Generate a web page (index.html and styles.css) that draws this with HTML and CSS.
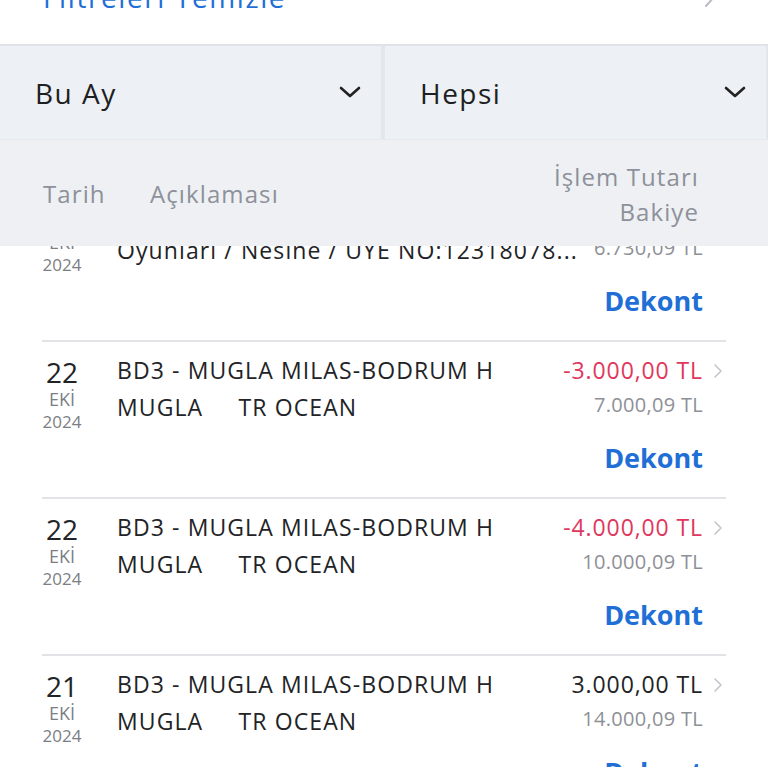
FILE: index.html
```html
<!DOCTYPE html>
<html lang="tr">
<head>
<meta charset="utf-8">
<link rel="stylesheet" href="styles.css">
</head>
<body>
<div class="page">
  <div class="clear-row">
    <span class="clear-link">Filtreleri Temizle</span>
    <svg class="clear-chev" width="14" height="24" viewBox="0 0 14 24"><path d="M3 3 L11 12 L3 21" fill="none" stroke="#b9bdc3" stroke-width="2" stroke-linecap="round" stroke-linejoin="round"/></svg>
  </div>
  <div class="selects">
    <div class="select"><span>Bu Ay</span><svg width="22" height="14" viewBox="0 0 22 14"><path d="M2 3 L11 11 L20 3" fill="none" stroke="#222" stroke-width="2.6" stroke-linecap="round" stroke-linejoin="round"/></svg></div>
    <div class="select"><span>Hepsi</span><svg width="22" height="14" viewBox="0 0 22 14"><path d="M2 3 L11 11 L20 3" fill="none" stroke="#222" stroke-width="2.6" stroke-linecap="round" stroke-linejoin="round"/></svg></div>
  </div>
  <div class="table-head">
    <div class="th-date">Tarih</div>
    <div class="th-desc">Açıklaması</div>
    <div class="th-amt">İşlem Tutarı<br>Bakiye</div>
  </div>
  <div class="list">
    <div class="list-inner">
      <div class="row">
        <div class="date"><div class="day">23</div><div class="mon">EKİ</div><div class="yr">2024</div></div>
        <div class="desc"><div class="line">Nesine Şans</div><div class="line">Oyunları / Nesine / ÜYE NO:12318078...</div></div>
        <div class="vals">
          <div class="amts"><div class="amt neg">-250,00 TL</div><div class="bal">6.730,09 TL</div><div class="dekont">Dekont</div></div>
          <svg class="chev" width="10" height="16" viewBox="0 0 10 16"><path d="M2 2 L8 8 L2 14" fill="none" stroke="#c3c6cb" stroke-width="1.6" stroke-linecap="round" stroke-linejoin="round"/></svg>
        </div>
      </div>
      <div class="row">
        <div class="date"><div class="day">22</div><div class="mon">EKİ</div><div class="yr">2024</div></div>
        <div class="desc"><div class="line">BD3 - MUGLA MILAS-BODRUM H</div><div class="line pre">MUGLA     TR OCEAN</div></div>
        <div class="vals">
          <div class="amts"><div class="amt neg">-3.000,00 TL</div><div class="bal">7.000,09 TL</div><div class="dekont">Dekont</div></div>
          <svg class="chev" width="10" height="16" viewBox="0 0 10 16"><path d="M2 2 L8 8 L2 14" fill="none" stroke="#c3c6cb" stroke-width="1.6" stroke-linecap="round" stroke-linejoin="round"/></svg>
        </div>
      </div>
      <div class="row">
        <div class="date"><div class="day">22</div><div class="mon">EKİ</div><div class="yr">2024</div></div>
        <div class="desc"><div class="line">BD3 - MUGLA MILAS-BODRUM H</div><div class="line pre">MUGLA     TR OCEAN</div></div>
        <div class="vals">
          <div class="amts"><div class="amt neg">-4.000,00 TL</div><div class="bal">10.000,09 TL</div><div class="dekont">Dekont</div></div>
          <svg class="chev" width="10" height="16" viewBox="0 0 10 16"><path d="M2 2 L8 8 L2 14" fill="none" stroke="#c3c6cb" stroke-width="1.6" stroke-linecap="round" stroke-linejoin="round"/></svg>
        </div>
      </div>
      <div class="row">
        <div class="date"><div class="day">21</div><div class="mon">EKİ</div><div class="yr">2024</div></div>
        <div class="desc"><div class="line">BD3 - MUGLA MILAS-BODRUM H</div><div class="line pre">MUGLA     TR OCEAN</div></div>
        <div class="vals">
          <div class="amts"><div class="amt">3.000,00 TL</div><div class="bal">14.000,09 TL</div><div class="dekont">Dekont</div></div>
          <svg class="chev" width="10" height="16" viewBox="0 0 10 16"><path d="M2 2 L8 8 L2 14" fill="none" stroke="#c3c6cb" stroke-width="1.6" stroke-linecap="round" stroke-linejoin="round"/></svg>
        </div>
      </div>
    </div>
  </div>
</div>
</body>
</html>
```
FILE: styles.css
```css
html, body {
  margin: 0;
  padding: 0;
  background: #ffffff;
}
body {
  font-family: "Open Sans", "Noto Sans", sans-serif;
  color: #222326;
}
.page {
  width: 768px;
  height: 768px;
  overflow: hidden;
}
.clear-row {
  margin-top: -16px;
  height: 60px;
  display: flex;
  justify-content: space-between;
  align-items: flex-start;
  padding: 0 51px 0 43px;
  border-bottom: 2px solid #dfe2e6;
}
.clear-link {
  font-size: 28px;
  line-height: 26px;
  letter-spacing: 1.6px;
  color: #1f6fd6;
}
.clear-chev {
  margin-top: 1px;
}
.selects {
  display: grid;
  grid-template-columns: 1fr 1fr;
  gap: 4px;
  padding-right: 2px;
  background: #e3e6ea;
}
.select {
  height: 93px;
  background: #edf0f4;
  display: flex;
  align-items: center;
  justify-content: space-between;
  padding: 0 20px 0 35px;
  font-size: 28px;
  letter-spacing: 1.5px;
  color: #1e1f22;
}
.select svg {
  margin-top: -2px;
}
.table-head {
  height: 106px;
  border-top: 1px solid #e6e9ed;
  background: #eef0f4;
  display: flex;
  align-items: center;
  padding: 0 69px 0 43px;
  font-size: 24px;
  letter-spacing: 1.1px;
  color: #8d9199;
}
.th-date {
  width: 107px;
}
.th-desc {
  flex: 1;
}
.th-amt {
  text-align: right;
  line-height: 35px;
  margin-top: 1px;
}
.list {
  height: 521px;
  overflow: hidden;
}
.list-inner {
  margin-top: -61px;
}
.row {
  margin: 0 42px;
  padding: 10px 0 21px;
  border-bottom: 2px solid #e1e3e6;
  display: flex;
}
.date {
  width: 40px;
  text-align: center;
  margin-right: 35px;
  flex: none;
}
.day {
  margin-top: 3px;
  font-size: 28px;
  line-height: 34px;
  color: #222326;
}
.mon {
  font-size: 18px;
  line-height: 20px;
  color: #7b7e84;
}
.yr {
  font-size: 17px;
  line-height: 26px;
  color: #7b7e84;
}
.desc {
  flex: 1;
  min-width: 0;
  font-size: 23px;
  line-height: 37px;
  letter-spacing: 1.1px;
}
.line {
  white-space: nowrap;
  overflow: hidden;
}
.pre {
  white-space: pre;
}
.vals {
  flex: none;
  display: flex;
  align-items: flex-start;
}
.amts {
  text-align: right;
}
.amt {
  font-size: 23px;
  line-height: 37px;
  letter-spacing: 0.9px;
  color: #222326;
}
.amt.neg {
  color: #e0375d;
}
.bal {
  font-size: 20px;
  line-height: 32px;
  letter-spacing: 0.3px;
  color: #8d9096;
}
.dekont {
  margin-top: 19px;
  font-size: 27px;
  line-height: 36px;
  font-weight: 700;
  color: #1f6fd6;
}
.chev {
  margin: 11px 3px 0 10px;
}
```
